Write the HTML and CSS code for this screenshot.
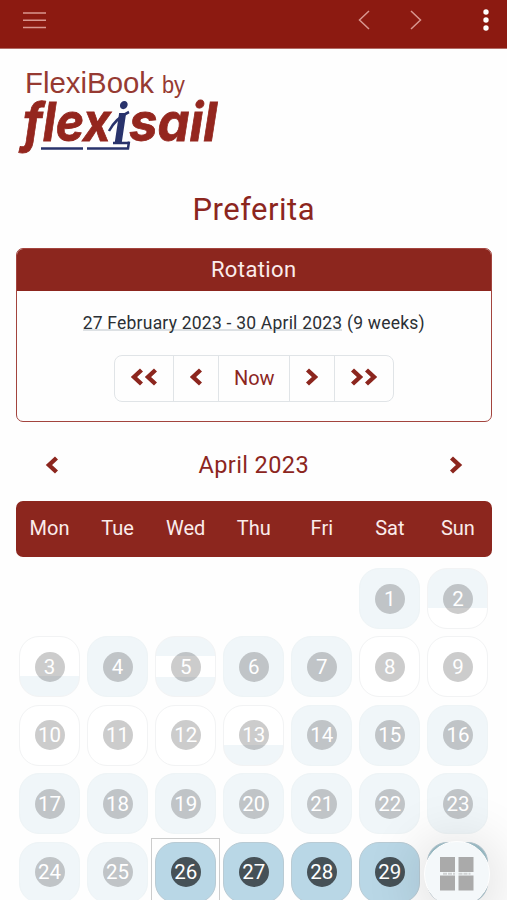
FILE: index.html
```
<!DOCTYPE html>
<html lang="en">
<head>
<meta charset="UTF-8">
<meta name="viewport" content="width=device-width, initial-scale=1.0">
<title>FlexiBook – Preferita</title>
<link rel="stylesheet" href="styles.css">
</head>
<body>

<svg class="defs" aria-hidden="true">
  <symbol id="left" viewBox="0 0 14 18"><path d="M11.500 2 4 9l7.500 7"/></symbol>
  <symbol id="right" viewBox="0 0 14 18"><path d="M2.500 2 10 9l-7.500 7"/></symbol>
</svg>

<header class="topbar">
  <svg class="menu" viewBox="0 0 24 18"><path d="M0 2h23M0 9.200h23M0 16.500h23"/></svg>
  <svg class="nav" viewBox="0 0 64 20"><path d="M11 1 1.500 10 11 19M53 1l9.500 9L53 19"/></svg>
  <svg class="dots" viewBox="0 0 6 22"><circle cx="3" cy="3" r="2.700"/><circle cx="3" cy="11" r="2.700"/><circle cx="3" cy="19" r="2.700"/></svg>
</header>

<main>
  <svg class="logo" viewBox="0 0 210 90" role="img" aria-label="FlexiBook by flexisail">
    <g class="logo-top">
      <text x="9" y="28" font-size="29" textLength="129" lengthAdjust="spacingAndGlyphs">FlexiBook</text>
      <text x="146" y="28" font-size="23" textLength="23" lengthAdjust="spacingAndGlyphs">by</text>
    </g>
    <g class="logo-name">
      <text x="7" y="76" textLength="88" lengthAdjust="spacingAndGlyphs">flex</text>
      <text class="navy" x="98" y="77" textLength="13" lengthAdjust="spacingAndGlyphs">i</text>
      <text x="113" y="76" textLength="88" lengthAdjust="spacingAndGlyphs">sail</text>
    </g>
    <g class="logo-hull">
      <path d="M25 83.500h42M71 83.500h41l1-7M93 66Q100 53 113 47M97 78h16"/>
    </g>
  </svg>

  <h1>Preferita</h1>

  <section class="card">
    <h2>Rotation</h2>
    <p class="period"><span>27 February 2023 - 30 April 2023</span> (9 weeks)</p>
    <div class="btn-group">
      <button class="wide"><svg><use href="#left"/></svg><svg><use href="#left"/></svg></button>
      <button><svg><use href="#left"/></svg></button>
      <button class="now">Now</button>
      <button><svg><use href="#right"/></svg></button>
      <button class="wide"><svg><use href="#right"/></svg><svg><use href="#right"/></svg></button>
    </div>
  </section>

  <div class="month">
    <svg><use href="#left"/></svg>
    <h3>April 2023</h3>
    <svg><use href="#right"/></svg>
  </div>

  <div class="weekdays">
    <span>Mon</span><span>Tue</span><span>Wed</span><span>Thu</span><span>Fri</span><span>Sat</span><span>Sun</span>
  </div>

  <div class="days">
    <div class="day full first"><b>1</b></div>
    <div class="day top"><b>2</b></div>

    <div class="day bottom"><b>3</b></div>
    <div class="day full"><b>4</b></div>
    <div class="day split"><b>5</b></div>
    <div class="day full"><b>6</b></div>
    <div class="day full"><b>7</b></div>
    <div class="day"><b>8</b></div>
    <div class="day"><b>9</b></div>

    <div class="day"><b>10</b></div>
    <div class="day"><b>11</b></div>
    <div class="day"><b>12</b></div>
    <div class="day bottom"><b>13</b></div>
    <div class="day full"><b>14</b></div>
    <div class="day full"><b>15</b></div>
    <div class="day full"><b>16</b></div>

    <div class="day full"><b>17</b></div>
    <div class="day full"><b>18</b></div>
    <div class="day full"><b>19</b></div>
    <div class="day full"><b>20</b></div>
    <div class="day full"><b>21</b></div>
    <div class="day full"><b>22</b></div>
    <div class="day full"><b>23</b></div>

    <div class="day full"><b>24</b></div>
    <div class="day full"><b>25</b></div>
    <div class="day open today"><b>26</b></div>
    <div class="day open"><b>27</b></div>
    <div class="day open"><b>28</b></div>
    <div class="day open"><b>29</b></div>
    <div class="day open last"><b>30</b></div>
  </div>
</main>

<button class="fab" aria-label="Apps">
  <svg viewBox="0 0 34 34"><path d="M0 0h15v15H0zM18.500 0h15v15h-15zM0 18.500h15v15H0zM18.500 18.500h15v15h-15z"/><path class="trace" d="M3 16.800h12M18.500 16.800h12"/></svg>
</button>

</body>
</html>
```
FILE: styles.css
```
:root{
  --red:#8c261e;
  --pale:#f0f6f9;
  --blue:#b9d7e6;
}

*{margin:0;padding:0;box-sizing:border-box}
html,body{height:900px;overflow:hidden}
body{font-family:Roboto,sans-serif;background:#fefefe;color:#2b3035}
button{font:inherit;background:none;border:0}
.defs{position:absolute;width:0;height:0}

/* Top bar */
.topbar{display:flex;align-items:flex-start;height:49px;padding:11px 18px 0 23px;background:#8c1a11;border-bottom:1px solid #b26c66}
.topbar svg{fill:none;stroke:#d9968f;stroke-width:1.5}
.menu{width:24px;height:18px}
.topbar .nav{width:64px;height:20px;margin-left:auto;margin-right:61px;margin-top:-1px}
.topbar .dots{width:6px;height:22px;margin-top:-2px;fill:#fff;stroke:none}

main{padding:0 15px 0 15.5px}

/* Logo */
.logo{display:block;width:210px;height:90px;margin-top:16px;overflow:visible}
.logo-top{font-family:"Liberation Sans",Arial,sans-serif;fill:#963a32}
.logo-name{font:italic 700 54px Inter,sans-serif;font-feature-settings:"cv11";fill:#94261e;stroke:#94261e;stroke-width:.8}
.logo-name .navy{fill:#29336c;stroke:none}
.logo-hull{fill:none;stroke:#29336c;stroke-width:2.5}

h1{margin-top:35px;font-size:31px;line-height:40px;font-weight:400;text-align:center;color:var(--red);letter-spacing:.5px}

/* Rotation card */
.card{height:174px;margin-top:18px;border:1.5px solid #a3443e;border-radius:7px;overflow:hidden;text-align:center}
.card h2{height:42px;font-size:22px;line-height:41px;font-weight:400;background:var(--red);color:#fbeceb;letter-spacing:.4px}
.period{margin-top:20px;font-size:17.5px;line-height:24px;letter-spacing:.22px}
.period span{display:inline-block;height:20px;border-bottom:2px solid #dde1e4}
.btn-group{display:inline-flex;height:47px;margin-top:20px;border:1px solid #e0e4e7;border-radius:8px;color:var(--red)}
.btn-group button{display:flex;align-items:center;justify-content:center;width:45px;color:inherit;font-size:20px}
.btn-group button+button{border-left:1px solid #e0e4e7}
.btn-group .wide{width:58.5px}
.btn-group .now{width:71px;padding-bottom:2px}
.btn-group svg,.month svg{width:14px;height:18px;fill:none;stroke:var(--red);stroke-width:4.4;margin-bottom:3px}

/* Month */
.month{display:flex;align-items:center;justify-content:space-between;height:30px;margin:28px 29px 0;color:var(--red)}
.month svg{margin-bottom:0}
.month h3{font-size:23.5px;font-weight:400;letter-spacing:.4px}
.weekdays{display:grid;grid-template-columns:repeat(7,1fr);height:56px;margin-top:21px;border-radius:7px;background:var(--red);color:#fbeceb;font-size:20px;line-height:55px;text-align:center}
.days{display:grid;grid-template-columns:repeat(7,1fr);grid-auto-rows:61px;row-gap:7.4px;justify-items:center;margin-top:11px}
.day{position:relative;display:flex;align-items:center;justify-content:center;width:61px;border:1.5px solid #f2f3f4;border-radius:20px;background:#fff}
.day b{display:flex;align-items:center;justify-content:center;width:30px;height:30px;border-radius:50%;background:rgba(0,0,0,.2);color:#fff;font-size:20.5px;font-weight:400}
.first{grid-column:6}
.full{background:var(--pale);border-color:#eef4f6}
.top{background:linear-gradient(var(--pale) 66%,#fff 66%)}
.bottom{background:linear-gradient(#fff 66%,var(--pale) 66%)}
.split{background:linear-gradient(var(--pale) 33%,#fff 33% 67%,var(--pale) 67%)}
.open{background:var(--blue);border-color:#b9cbd4}
.open b{background:#465157}
.last{background:#9fc1cb}
.today::before{content:"";position:absolute;inset:-5px;border:1.5px solid #ccc}

/* Floating button */
.fab{position:absolute;left:424px;top:841px;display:flex;align-items:center;justify-content:center;width:66px;height:66px;border-radius:50%;background:#f4f8fa;border:1px solid #fff;box-shadow:0 6px 55px 8px rgba(0,0,0,.13)}
.fab svg{width:34px;height:34px;fill:#aaa}
.fab .trace{stroke:#d0d2d3;stroke-width:2;stroke-dasharray:4 1}
```
